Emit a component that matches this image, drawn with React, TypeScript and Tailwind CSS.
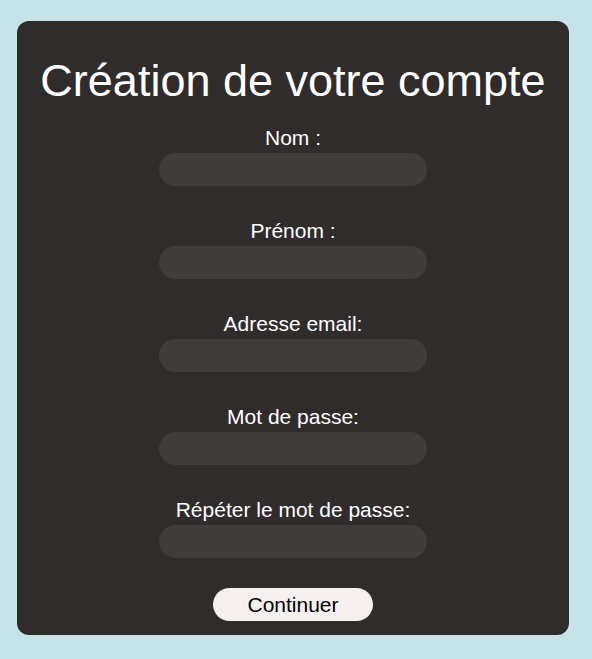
import React from "react";

const fields = ["Nom :", "Prénom :", "Adresse email:", "Mot de passe:", "Répéter le mot de passe:"];

export default function App() {
  return (
    <div
      className="min-h-[659px] w-full bg-[#c5e3e8] pt-[21px] pl-[17px]"
      style={{ fontFamily: '"Liberation Sans", Arial, sans-serif' }}
    >
      <div className="w-[552px] rounded-[12px] bg-[#302c2c] pt-[34px] pb-[14px] flex flex-col items-center text-white">
        <h1 className="text-[45px] leading-[52px] m-0 font-normal">Création de votre compte</h1>
        <div className="flex flex-col items-center mt-[19px] w-full">
          {fields.map((f, i) => (
            <div key={i} className={`flex flex-col items-center ${i > 0 ? "mt-[33px]" : ""}`}>
              <label className="text-[21px] leading-[24px]">{f}</label>
              <input
                type={i >= 3 ? "password" : "text"}
                className="mt-[3px] h-[33px] w-[268px] rounded-full bg-[#403c3c] outline-none border-0 px-3 text-white"
              />
            </div>
          ))}
        </div>
        <button className="mt-[30px] h-[33px] w-[160px] rounded-full bg-[#f5f0ef] text-black text-[21px] leading-[24px]">
          Continuer
        </button>
      </div>
    </div>
  );
}
